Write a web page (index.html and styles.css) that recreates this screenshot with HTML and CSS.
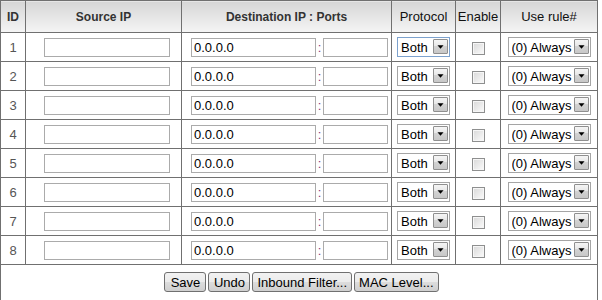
FILE: index.html
```html
<!DOCTYPE html>
<html lang="en">
<head>
  <meta charset="UTF-8">
  <title>Virtual Server</title>
  <link rel="stylesheet" href="styles.css">
</head>
<body>

  <!-- Port forwarding rules -->
  <table class="rules">
    <colgroup>
      <col class="c-id">
      <col class="c-src">
      <col class="c-dst">
      <col class="c-proto">
      <col class="c-en">
      <col class="c-rule">
    </colgroup>
    <thead>
      <tr>
        <th>ID</th>
        <th>Source IP</th>
        <th>Destination IP : Ports</th>
        <th class="light">Protocol</th>
        <th class="light">Enable</th>
        <th class="light">Use rule#</th>
      </tr>
    </thead>
    <tbody>
      <tr>
        <td class="id">1</td>
        <td class="src"><input type="text" class="ip"></td>
        <td class="dst"><input type="text" class="dip" value="0.0.0.0"><span class="colon">:</span><input type="text" class="port"></td>
        <td class="mid"><span class="sel proto focus"><select><option>Both</option><option>TCP</option><option>UDP</option></select><svg class="arrow" width="15" height="15" viewBox="0 0 15 15"><path d="M4 6h7l-3.5 4z" fill="#000"/></svg></span></td>
        <td class="mid"><input type="checkbox" class="chk"></td>
        <td class="mid"><span class="sel rule"><select><option>(0) Always</option></select><svg class="arrow" width="15" height="15" viewBox="0 0 15 15"><path d="M4 6h7l-3.5 4z" fill="#000"/></svg></span></td>
      </tr>
      <tr>
        <td class="id">2</td>
        <td class="src"><input type="text" class="ip"></td>
        <td class="dst"><input type="text" class="dip" value="0.0.0.0"><span class="colon">:</span><input type="text" class="port"></td>
        <td class="mid"><span class="sel proto"><select><option>Both</option><option>TCP</option><option>UDP</option></select><svg class="arrow" width="15" height="15" viewBox="0 0 15 15"><path d="M4 6h7l-3.5 4z" fill="#000"/></svg></span></td>
        <td class="mid"><input type="checkbox" class="chk"></td>
        <td class="mid"><span class="sel rule"><select><option>(0) Always</option></select><svg class="arrow" width="15" height="15" viewBox="0 0 15 15"><path d="M4 6h7l-3.5 4z" fill="#000"/></svg></span></td>
      </tr>
      <tr>
        <td class="id">3</td>
        <td class="src"><input type="text" class="ip"></td>
        <td class="dst"><input type="text" class="dip" value="0.0.0.0"><span class="colon">:</span><input type="text" class="port"></td>
        <td class="mid"><span class="sel proto"><select><option>Both</option><option>TCP</option><option>UDP</option></select><svg class="arrow" width="15" height="15" viewBox="0 0 15 15"><path d="M4 6h7l-3.5 4z" fill="#000"/></svg></span></td>
        <td class="mid"><input type="checkbox" class="chk"></td>
        <td class="mid"><span class="sel rule"><select><option>(0) Always</option></select><svg class="arrow" width="15" height="15" viewBox="0 0 15 15"><path d="M4 6h7l-3.5 4z" fill="#000"/></svg></span></td>
      </tr>
      <tr>
        <td class="id">4</td>
        <td class="src"><input type="text" class="ip"></td>
        <td class="dst"><input type="text" class="dip" value="0.0.0.0"><span class="colon">:</span><input type="text" class="port"></td>
        <td class="mid"><span class="sel proto"><select><option>Both</option><option>TCP</option><option>UDP</option></select><svg class="arrow" width="15" height="15" viewBox="0 0 15 15"><path d="M4 6h7l-3.5 4z" fill="#000"/></svg></span></td>
        <td class="mid"><input type="checkbox" class="chk"></td>
        <td class="mid"><span class="sel rule"><select><option>(0) Always</option></select><svg class="arrow" width="15" height="15" viewBox="0 0 15 15"><path d="M4 6h7l-3.5 4z" fill="#000"/></svg></span></td>
      </tr>
      <tr>
        <td class="id">5</td>
        <td class="src"><input type="text" class="ip"></td>
        <td class="dst"><input type="text" class="dip" value="0.0.0.0"><span class="colon">:</span><input type="text" class="port"></td>
        <td class="mid"><span class="sel proto"><select><option>Both</option><option>TCP</option><option>UDP</option></select><svg class="arrow" width="15" height="15" viewBox="0 0 15 15"><path d="M4 6h7l-3.5 4z" fill="#000"/></svg></span></td>
        <td class="mid"><input type="checkbox" class="chk"></td>
        <td class="mid"><span class="sel rule"><select><option>(0) Always</option></select><svg class="arrow" width="15" height="15" viewBox="0 0 15 15"><path d="M4 6h7l-3.5 4z" fill="#000"/></svg></span></td>
      </tr>
      <tr>
        <td class="id">6</td>
        <td class="src"><input type="text" class="ip"></td>
        <td class="dst"><input type="text" class="dip" value="0.0.0.0"><span class="colon">:</span><input type="text" class="port"></td>
        <td class="mid"><span class="sel proto"><select><option>Both</option><option>TCP</option><option>UDP</option></select><svg class="arrow" width="15" height="15" viewBox="0 0 15 15"><path d="M4 6h7l-3.5 4z" fill="#000"/></svg></span></td>
        <td class="mid"><input type="checkbox" class="chk"></td>
        <td class="mid"><span class="sel rule"><select><option>(0) Always</option></select><svg class="arrow" width="15" height="15" viewBox="0 0 15 15"><path d="M4 6h7l-3.5 4z" fill="#000"/></svg></span></td>
      </tr>
      <tr>
        <td class="id">7</td>
        <td class="src"><input type="text" class="ip"></td>
        <td class="dst"><input type="text" class="dip" value="0.0.0.0"><span class="colon">:</span><input type="text" class="port"></td>
        <td class="mid"><span class="sel proto"><select><option>Both</option><option>TCP</option><option>UDP</option></select><svg class="arrow" width="15" height="15" viewBox="0 0 15 15"><path d="M4 6h7l-3.5 4z" fill="#000"/></svg></span></td>
        <td class="mid"><input type="checkbox" class="chk"></td>
        <td class="mid"><span class="sel rule"><select><option>(0) Always</option></select><svg class="arrow" width="15" height="15" viewBox="0 0 15 15"><path d="M4 6h7l-3.5 4z" fill="#000"/></svg></span></td>
      </tr>
      <tr>
        <td class="id">8</td>
        <td class="src"><input type="text" class="ip"></td>
        <td class="dst"><input type="text" class="dip" value="0.0.0.0"><span class="colon">:</span><input type="text" class="port"></td>
        <td class="mid"><span class="sel proto"><select><option>Both</option><option>TCP</option><option>UDP</option></select><svg class="arrow" width="15" height="15" viewBox="0 0 15 15"><path d="M4 6h7l-3.5 4z" fill="#000"/></svg></span></td>
        <td class="mid"><input type="checkbox" class="chk"></td>
        <td class="mid"><span class="sel rule"><select><option>(0) Always</option></select><svg class="arrow" width="15" height="15" viewBox="0 0 15 15"><path d="M4 6h7l-3.5 4z" fill="#000"/></svg></span></td>
      </tr>
      <tr class="actions">
        <td colspan="6">
          <div class="buttons">
            <button type="button">Save</button>
            <button type="button">Undo</button>
            <button type="button">Inbound Filter...</button>
            <button type="button">MAC Level...</button>
          </div>
        </td>
      </tr>
    </tbody>
  </table>

</body>
</html>
```

FILE: styles.css
```css
body {
  margin: 0;
  background: #fff;
  font-family: "Liberation Sans", Arial, sans-serif;
  font-size: 13px;
  color: #222;
}

.rules {
  border-collapse: collapse;
  table-layout: fixed;
  width: 597px;
}
.c-id { width: 25px; }
.c-src { width: 156px; }
.c-dst { width: 210px; }
.c-proto { width: 64px; }
.c-en { width: 45px; }
.c-rule { width: 97px; }

.rules th, .rules td {
  border: 1px solid #707070;
  padding: 0;
}
.rules th {
  height: 31px;
  font-size: 12px;
  font-weight: bold;
  color: #333;
  background: linear-gradient(#d6d6d6, #f5f5f5);
  text-align: center;
}
.rules th.light {
  font-size: 13px;
  font-weight: normal;
  color: #111;
}
.rules td {
  height: 28px;
}

.id {
  text-align: center;
  color: #555;
}
.src {
  padding-left: 18px !important;
}
.dst {
  padding-left: 9px !important;
}
.mid {
  text-align: center;
}

input[type="text"] {
  box-sizing: border-box;
  height: 19px;
  border: 1px solid #ababab;
  padding: 0 2px;
  font: 13px "Liberation Sans", Arial, sans-serif;
  color: #000;
  vertical-align: middle;
  margin: 0;
}
.ip { width: 126px; }
.dip { width: 125px; }
.port { width: 65px; }
.colon {
  display: inline-block;
  width: 7px;
  text-align: center;
  color: #8a3d7a;
  vertical-align: middle;
}

/* dropdowns */
.sel {
  position: relative;
  display: inline-block;
  vertical-align: middle;
}
.sel select {
  appearance: none;
  -webkit-appearance: none;
  box-sizing: border-box;
  height: 20px;
  border: 1px solid #a5a5a5;
  border-radius: 0;
  background: #fff;
  font: 13px "Liberation Sans", Arial, sans-serif;
  color: #000;
  padding: 0 0 0 3px;
  margin: 0;
  display: block;
}
.proto select { width: 53px; }
.rule select { width: 83px; }
.sel.focus select {
  border-color: #7da2ce;
}
.arrow {
  position: absolute;
  right: 2px;
  top: 2px;
  box-sizing: border-box;
  border: 1px solid #8f8f8f;
  border-radius: 1px;
  background: linear-gradient(#f5f5f5, #e6e6e6 50%, #d2d2d2 50%, #c8c8c8);
  pointer-events: none;
}

.chk {
  appearance: none;
  -webkit-appearance: none;
  width: 13px;
  height: 13px;
  margin: 0;
  vertical-align: middle;
  border: 1px solid #8e8f8f;
  box-shadow: inset 0 0 0 1px #f6f6f6;
  background: linear-gradient(135deg, #d8d8d8, #fbfbfb);
}

/* footer buttons */
.actions td {
  height: 50px;
  vertical-align: top;
}
.buttons {
  display: flex;
  justify-content: center;
  gap: 2px;
  padding-top: 7px;
  padding-left: 5px;
}
.buttons button {
  min-width: 42px;
  height: 20px;
  padding: 0 4px;
  border: 1px solid #707070;
  border-radius: 3px;
  background: linear-gradient(#f2f2f2, #ebebeb 50%, #dddddd 50%, #cfcfcf);
  font: 13px "Liberation Sans", Arial, sans-serif;
  color: #000;
}
```
